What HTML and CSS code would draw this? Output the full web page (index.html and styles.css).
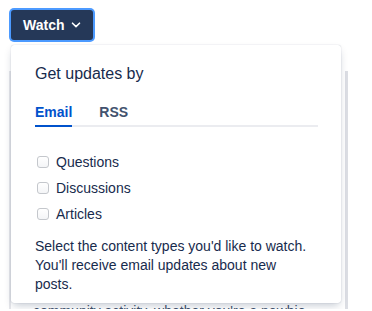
FILE: index.html
```html
<!DOCTYPE html>
<html lang="en">
<head>
  <meta charset="UTF-8" />
  <title>Watch</title>
  <link rel="stylesheet" href="styles.css">
</head>
<body>
  <div class="page">
    <button class="watch-btn">
      Watch
      <svg class="chevron" viewBox="0 0 10 6" xmlns="http://www.w3.org/2000/svg">
        <path d="M1.5 1.2 L5 4.6 L8.5 1.2" />
      </svg>
    </button>

    <div class="content">
      <p>community activity, whether you're a newbie</p>
    </div>

    <div class="watch-menu">
      <h3>Get updates by</h3>
      <div class="tabs">
        <span class="tab active">Email</span>
        <span class="tab">RSS</span>
      </div>
      <ul class="types">
        <li><label><input type="checkbox"> Questions</label></li>
        <li><label><input type="checkbox"> Discussions</label></li>
        <li><label><input type="checkbox"> Articles</label></li>
      </ul>
      <p class="hint">Select the content types you'd like to watch. You'll receive email updates about new posts.</p>
    </div>
  </div>
</body>
</html>
```

FILE: styles.css
```css
body {
  margin: 0;
  background: #fff;
  font-family: "Liberation Sans", Arial, sans-serif;
  color: #172B4D;
  overflow: hidden;
}

.page {
  position: relative;
  padding: 10px 0 0 11px;
}

.watch-btn {
  display: inline-flex;
  align-items: center;
  gap: 7px;
  height: 30px;
  padding: 0 12px;
  border: none;
  border-radius: 3px;
  background: #253858;
  color: #fff;
  font-family: inherit;
  font-size: 14px;
  font-weight: bold;
  box-shadow: 0 0 0 2px #4C9AFF;
}

.chevron {
  width: 10px;
  height: 6px;
  fill: none;
  stroke: #fff;
  stroke-width: 1.6;
  stroke-linecap: round;
  stroke-linejoin: round;
}

/* page content sitting behind the menu */
.content {
  margin: 31px 0 0 -2px;
  width: 334px;
  height: 238px;
  overflow: hidden;
  background: #fff;
  border-left: 2px solid #E6E7EB;
  border-right: 3px solid #DCDEE4;
}

.content p {
  margin: 0;
  padding: 230px 0 0 22px;
  font-size: 14px;
  line-height: 20px;
  color: #42526E;
}

.watch-menu {
  position: absolute;
  top: 45px;
  left: 11px;
  width: 330px;
  height: 258px;
  box-sizing: border-box;
  padding: 19px 23px 0 24px;
  background: #fff;
  border-radius: 3px;
  box-shadow: 0 4px 8px -2px rgba(9, 30, 66, 0.25), 0 0 1px rgba(9, 30, 66, 0.31);
}

.watch-menu h3 {
  margin: 0 0 18px;
  font-size: 16px;
  font-weight: normal;
  line-height: 20px;
}

.tabs {
  display: flex;
  gap: 27px;
  border-bottom: 2px solid #EBECF0;
}

.tab {
  font-size: 14px;
  font-weight: bold;
  line-height: 20px;
  padding-bottom: 3px;
  margin-bottom: -2px;
  color: #42526E;
}

.tab.active {
  color: #0052CC;
  border-bottom: 2px solid #0052CC;
}

.types {
  list-style: none;
  margin: 22px 0 0;
  padding: 0;
}

.types li {
  height: 26px;
  display: flex;
  align-items: center;
}

.types label {
  display: flex;
  align-items: center;
  gap: 7px;
  font-size: 14px;
  line-height: 20px;
}

.types input {
  appearance: none;
  width: 12px;
  height: 12px;
  margin: 0 0 0 2px;
  border: 1px solid #C4C7CC;
  border-radius: 3px;
  background: linear-gradient(#fff, #F4F5F7);
}

.hint {
  max-width: 278px;
  margin: 10px 0 0;
  font-size: 14px;
  line-height: 19px;
}
```
